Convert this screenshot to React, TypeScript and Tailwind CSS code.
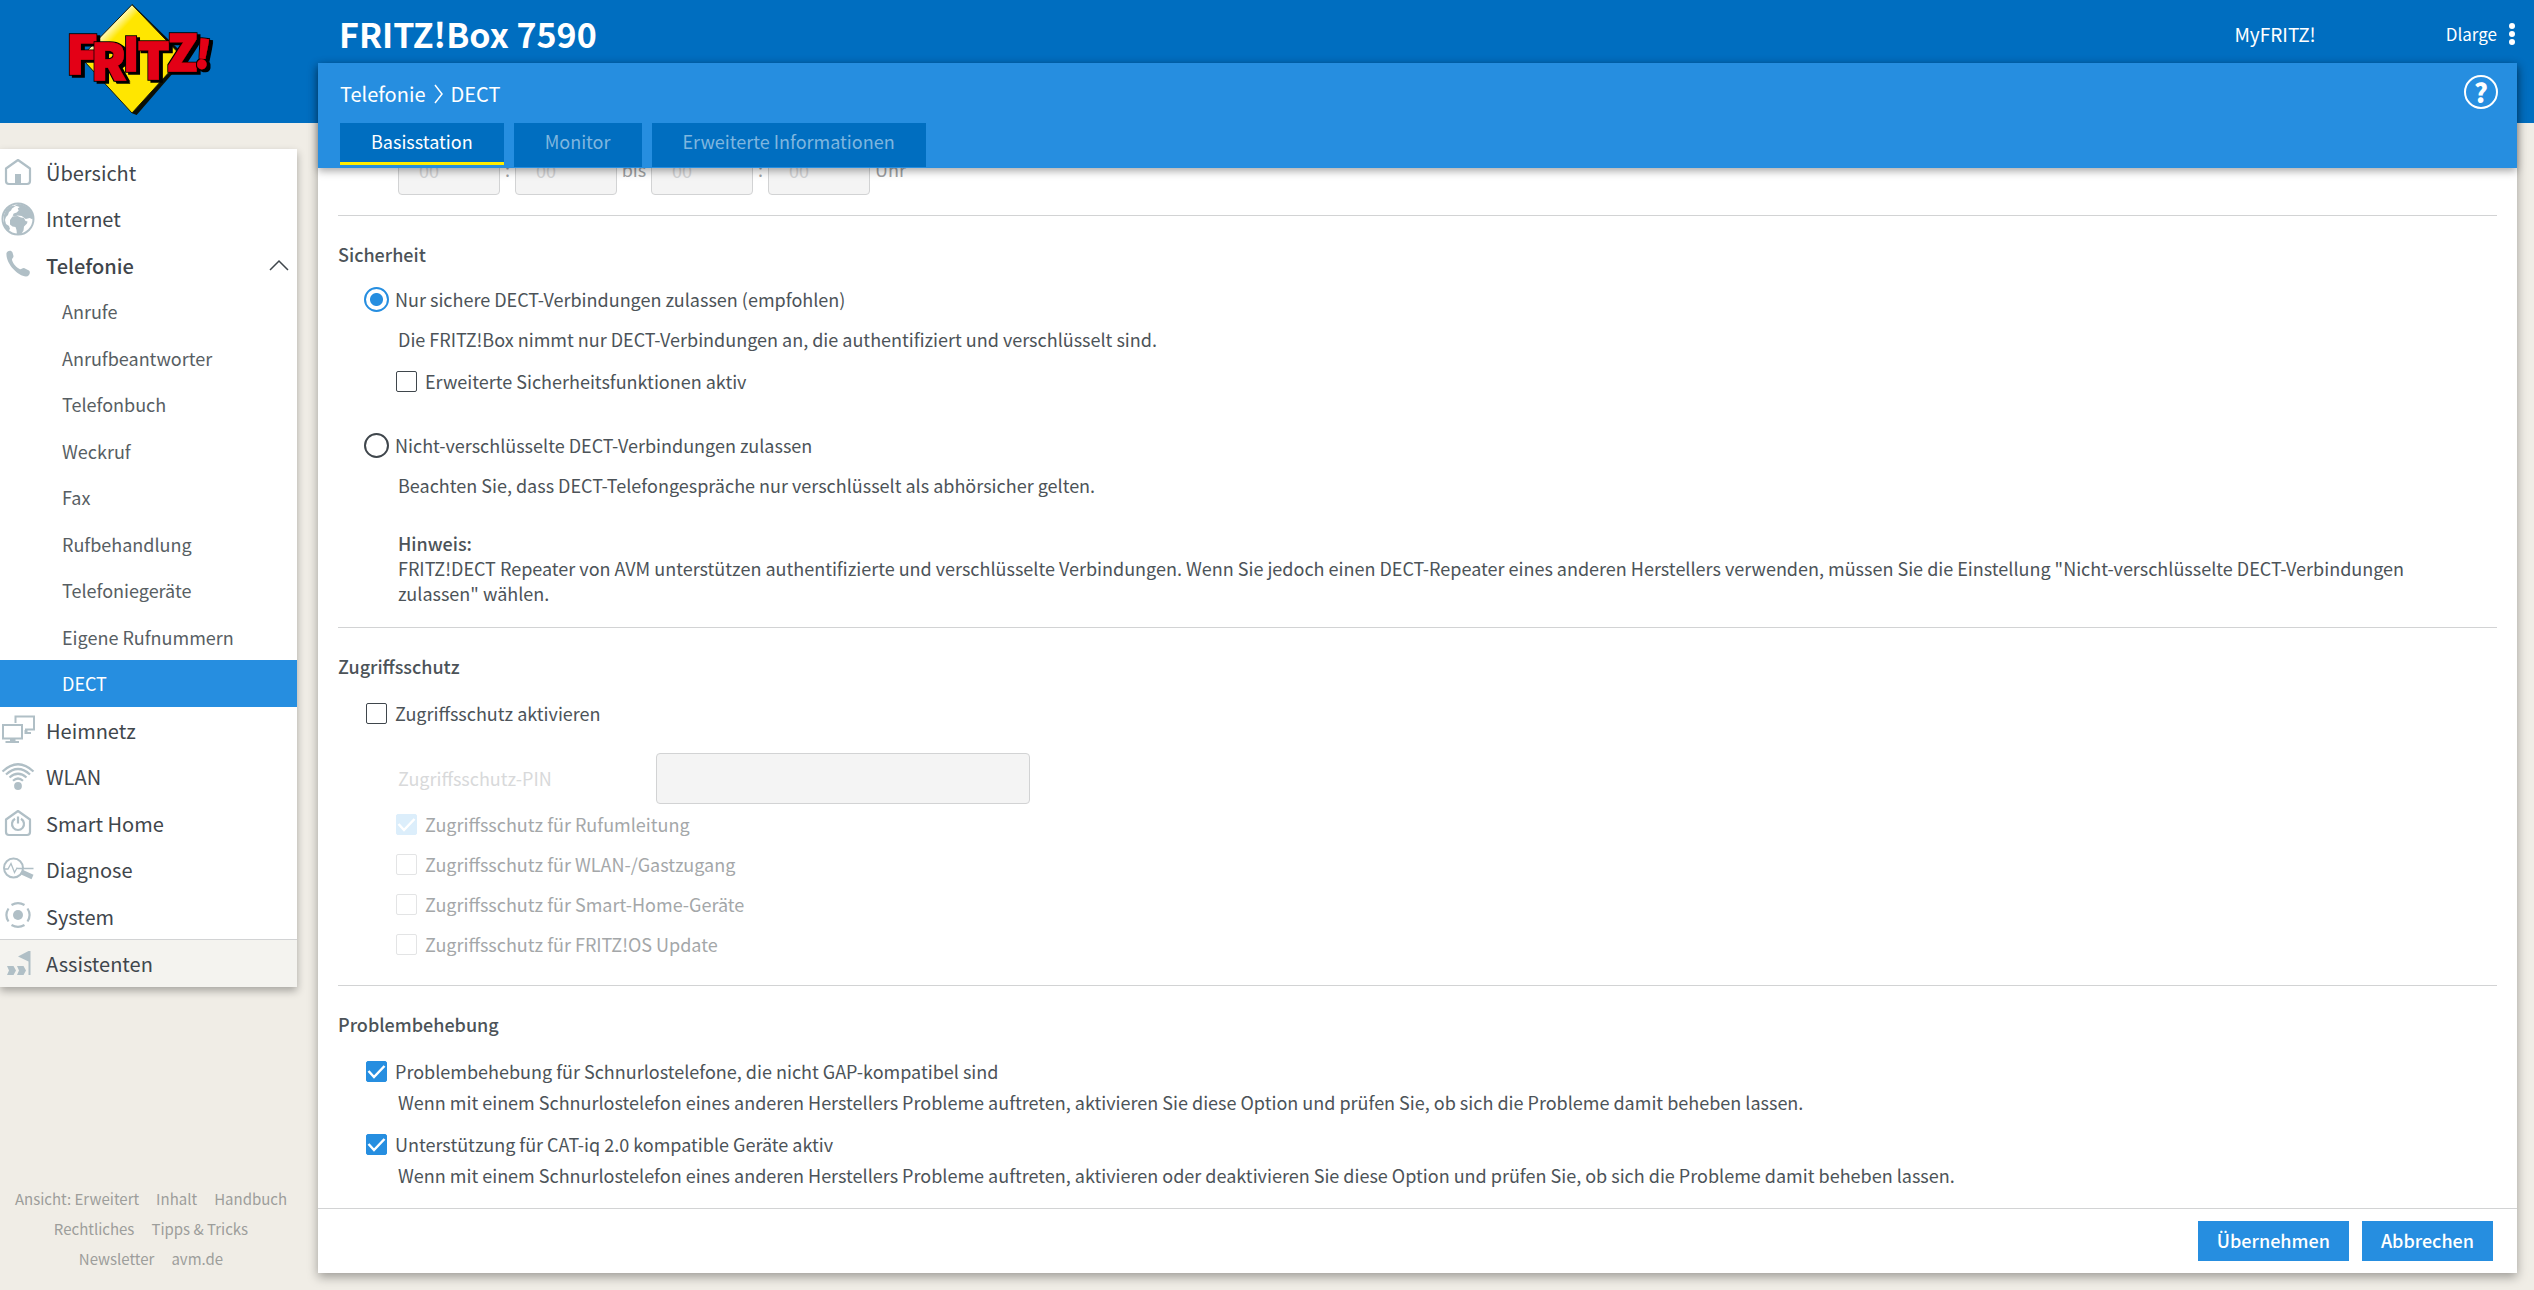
import { useState } from "react";
import type { ReactNode } from "react";

interface NavItem {
  label: string;
  icon?: ReactNode;
  level: "main" | "sub";
  open?: boolean;
}

const HomeIcon = () => (
  <svg viewBox="0 0 34 34" className="size-[34px]" fill="none" stroke="currentColor" strokeWidth={2.2}>
    <path d="M5 13.500 17 5l12 8.500V26q0 3-3 3H8q-3 0-3-3z" strokeLinejoin="round" />
    <path d="M14 19h6v9h-6z" fill="currentColor" stroke="none" />
  </svg>
);

const GlobeIcon = () => (
  <svg viewBox="0 0 34 34" className="size-[34px]">
    <circle cx="17" cy="17" r="15.500" fill="none" stroke="currentColor" strokeWidth={2} />
    <path
      fill="currentColor"
      d="M17 2c6 0 12 4 14.500 10 .8 2.500.5 4 .2 5.500l-3-1.500-4 1-4-3-4-.5-3 1-2-1 1-2 3-1 2-2-1-2 2-1.500-3-1-3 .5zM3 13l2-5 4-3.500 4-1 1 1-3 2-1 2-2 1.500-1 3-2 2-1 3 1 4 3 2 1 3-2 2-4-5z"
    />
    <path
      fill="currentColor"
      d="M9 18l2.500-3.500 5-.5 3.500 1.500 3 .5 1.500 3 2 .5-.5 2-3 3-.5 4-2 3-1.500 1.500-3 0-.5-5-1-3-3-.5-2.500-2z"
    />
  </svg>
);

const PhoneIcon = () => (
  <svg viewBox="0 0 34 34" className="size-[34px]" fill="currentColor">
    <path d="M5.500 5C7 2 10.500 2 11.500 4.500l1 3.500c.2 1.500-1.800 2.500-1.500 4 .8 3.500 5 8 8 9.200 1.500.3 2.500-1.300 4-1.200l5 2.500c2 1.500.2 6-3 6C17 28 4.500 15.500 5.500 5z" />
  </svg>
);

const NetworkIcon = () => (
  <svg viewBox="0 0 34 34" className="size-[34px]" fill="none" stroke="currentColor" strokeWidth={2}>
    <path d="M14.500 10V3.500H33v13h-9" />
    <path d="M2 12h19v13.500H2z" />
    <path d="M9 25.500h5.500v2.500h3.500v2H4.500v-2H9zM23.500 17h3v2h3.500v2h-6.500z" fill="currentColor" stroke="none" />
  </svg>
);

const WifiIcon = () => (
  <svg viewBox="0 0 34 34" className="size-[34px]" fill="none" stroke="currentColor" strokeWidth={2.2}>
    <path d="M1.500 11.500Q17-3 32.500 11.500M5 14.500Q17 3.500 29 14.500M8.500 17.500Q17 10 25.500 17.500M12 20.800q5-4.600 10 0" />
    <circle cx="17" cy="26" r="3.900" fill="currentColor" stroke="none" />
  </svg>
);

const SmartHomeIcon = () => (
  <svg viewBox="0 0 34 34" className="size-[34px]" fill="none" stroke="currentColor" strokeWidth={2.200}>
    <path d="M5 13.500 17 5l12 8.500V26q0 3-3 3H8q-3 0-3-3z" strokeLinejoin="round" />
    <path d="M14 12.800a6 6 0 1 0 6 0M17 10.500v7" />
  </svg>
);

const DiagnoseIcon = () => (
  <svg viewBox="0 0 34 34" className="size-[34px]" fill="none" stroke="currentColor">
    <circle cx="12.500" cy="15" r="9.500" strokeWidth={2} />
    <path d="M3 16h4l3-5.500 3.500 9 2.500-4.500L17 15.500h15.500" strokeWidth={1.300} />
    <path d="m20.500 19 11 5" strokeWidth={4.800} />
  </svg>
);

const SystemIcon = () => (
  <svg viewBox="0 0 34 34" className="size-[34px]" fill="none" stroke="currentColor" strokeWidth={2.200}>
    <circle cx="17" cy="16" r="5" fill="currentColor" stroke="none" />
    <path d="M10.500 6a12.500 12.500 0 0 1 13 0M10.500 26a12.500 12.500 0 0 0 13 0M7.500 9.500a12 12 0 0 0 0 13M26.500 9.500a12 12 0 0 1 0 13" />
  </svg>
);

const WizardIcon = () => (
  <svg viewBox="0 0 34 34" className="size-[34px]" fill="currentColor">
    <path d="M27.500 4h2v24h-2V14.500L17 9.500zM6 19h6.500l2.500 4.500-2.500 4.500H6l2-4.500zM16 19h6.500l2.500 4.500-2.500 4.500H16l2-4.500z" />
  </svg>
);

const NAV_ITEMS: NavItem[] = [
  { label: "Übersicht", icon: <HomeIcon />, level: "main" },
  { label: "Internet", icon: <GlobeIcon />, level: "main" },
  { label: "Telefonie", icon: <PhoneIcon />, level: "main", open: true },
  { label: "Anrufe", level: "sub" },
  { label: "Anrufbeantworter", level: "sub" },
  { label: "Telefonbuch", level: "sub" },
  { label: "Weckruf", level: "sub" },
  { label: "Fax", level: "sub" },
  { label: "Rufbehandlung", level: "sub" },
  { label: "Telefoniegeräte", level: "sub" },
  { label: "Eigene Rufnummern", level: "sub" },
  { label: "DECT", level: "sub" },
  { label: "Heimnetz", icon: <NetworkIcon />, level: "main" },
  { label: "WLAN", icon: <WifiIcon />, level: "main" },
  { label: "Smart Home", icon: <SmartHomeIcon />, level: "main" },
  { label: "Diagnose", icon: <DiagnoseIcon />, level: "main" },
  { label: "System", icon: <SystemIcon />, level: "main" },
  { label: "Assistenten", icon: <WizardIcon />, level: "main" },
];

const FOOTER_LINKS = [
  ["Ansicht: Erweitert", "Inhalt", "Handbuch"],
  ["Rechtliches", "Tipps & Tricks"],
  ["Newsletter", "avm.de"],
];

const TABS = ["Basisstation", "Monitor", "Erweiterte Informationen"];

const LOGO_LETTERS = [
  { char: "F", x: 19, y: 221, size: 156, rotate: 0 },
  { char: "R", x: 94, y: 239, size: 147, rotate: 0 },
  { char: "I", x: 189, y: 213, size: 138, rotate: 0 },
  { char: "T", x: 234, y: 238, size: 147, rotate: 0 },
  { char: "Z", x: 322, y: 212, size: 147, rotate: 0 },
  { char: "!", x: 402, y: 201, size: 112, rotate: 7 },
];

function Logo() {
  return (
    <svg viewBox="0 0 480 369" className="h-[123px] w-40" role="img" aria-label="FRITZ!">
      <defs>
        <linearGradient id="shine" x1="0" y1="0" x2="1" y2="1">
          <stop offset="0.240" stopColor="#fffbd0" />
          <stop offset="0.320" stopColor="#ffe600" />
        </linearGradient>
        <filter id="relief" x="-20%" y="-20%" width="150%" height="150%">
          <feMorphology in="SourceAlpha" operator="dilate" radius="2" result="edge" />
          <feOffset in="edge" dx="8" dy="6" result="shadow" />
          <feMerge>
            <feMergeNode in="shadow" />
            <feMergeNode in="edge" />
            <feMergeNode in="SourceGraphic" />
          </feMerge>
        </filter>
      </defs>
      <path d="M216 12 380 172 230 345 216 340z" fill="#0b0f06" />
      <path d="M216 14 368 172 216 339 62 172z" fill="url(#shine)" stroke="#1b1b06" strokeWidth={3} />
      <g
        fontFamily="'Noto Sans CJK SC', sans-serif"
        fontWeight={900}
        fill="#e30613"
        stroke="#e30613"
        strokeWidth={5}
      >
        {LOGO_LETTERS.map((l) => (
          <g key={l.char} filter="url(#relief)">
            <text x={l.x} y={l.y} fontSize={l.size} transform={`rotate(${l.rotate} ${l.x} ${l.y})`}>{l.char}</text>
          </g>
        ))}
      </g>
    </svg>
  );
}

function Sidebar() {
  const [active, setActive] = useState("DECT");

  return (
    <aside className="flex w-[318px] shrink-0 flex-col">
      <div className="flex h-[123px] pl-[60px]">
        <Logo />
      </div>

      <nav className="mt-[26px] w-[297px] bg-white shadow-[0_4px_8px_rgba(0,0,0,0.3)]">
        <ul>
          {NAV_ITEMS.map((item) => (
            <li
              key={item.label}
              className="h-[46px] last:h-12 last:border-t last:border-[#d2d3d4] last:bg-[#f4f3ef] even:not-last:h-[47px]"
            >
              <a
                href="#"
                onClick={() => setActive(item.label)}
                className={
                  item.level === "main"
                    ? "flex h-full items-center pr-2 pl-px text-[20px] text-[#3f464c]"
                    : item.label === active
                      ? "flex h-full items-center bg-[#268ee0] pl-[62px] text-[18px] text-white"
                      : "flex h-full items-center pl-[62px] text-[18px] text-[#575e63]"
                }
              >
                {item.icon && <span className="mr-[11px] text-[#b0bfc6]">{item.icon}</span>}
                <span className={item.open ? "font-medium" : ""}>{item.label}</span>
                {item.open && (
                  <svg viewBox="0 0 20 12" className="ml-auto h-3 w-5" fill="none" stroke="#3f464c" strokeWidth={1.500}>
                    <path d="M1 11 10 2l9 9" />
                  </svg>
                )}
              </a>
            </li>
          ))}
        </ul>
      </nav>

      <footer className="mt-auto mb-4 w-[302px] text-[15px] leading-[30px] text-[#9d9e9b]">
        {FOOTER_LINKS.map((row) => (
          <div key={row[0]} className="flex justify-center gap-[17px]">
            {row.map((link) => (
              <a key={link} href="#">{link}</a>
            ))}
          </div>
        ))}
      </footer>
    </aside>
  );
}

interface CheckProps {
  label: string;
  defaultChecked?: boolean;
  disabled?: boolean;
}

function Check({ label, defaultChecked, disabled }: CheckProps) {
  return (
    <label className={disabled ? "flex w-fit items-center gap-2 text-[#a4a7a9]" : "flex w-fit items-center gap-2"}>
      <span className="grid size-[21px] place-items-center">
        <input
          type="checkbox"
          defaultChecked={defaultChecked}
          disabled={disabled}
          className="peer col-start-1 row-start-1 size-[21px] appearance-none rounded-xs border border-[#3f464c] bg-white checked:border-[#268ee0] checked:bg-[#268ee0] disabled:border-[#e3e4e5] disabled:checked:border-[#dceefb] disabled:checked:bg-[#dceefb]"
        />
        <svg
          viewBox="0 0 21 21"
          className="pointer-events-none col-start-1 row-start-1 hidden size-[21px] peer-checked:block"
          fill="none"
          stroke="white"
          strokeWidth={2.500}
        >
          <path d="m2.500 10 5.500 6L18.500 5" />
        </svg>
      </span>
      {label}
    </label>
  );
}

function Radio({ label, defaultChecked }: CheckProps) {
  return (
    <label className="flex w-fit items-center gap-[6px]">
      <input
        type="radio"
        name="security"
        defaultChecked={defaultChecked}
        className="size-[25px] appearance-none rounded-full border-2 border-[#3f464c] bg-white checked:border-[#268ee0] checked:bg-[radial-gradient(circle,#268ee0_6px,white_7px)]"
      />
      {label}
    </label>
  );
}

function TimeInput({ label }: { label: string }) {
  return (
    <input
      aria-label={label}
      placeholder="00"
      disabled
      className="h-[51px] w-[102px] rounded-sm border border-[#d2d3d4] bg-[#f4f4f4] pl-5 placeholder:text-[#d2d3d4]"
    />
  );
}

export default function App() {
  const [tab, setTab] = useState("Basisstation");

  return (
    <div className="flex h-screen bg-[linear-gradient(#006ec0_123px,#f0ede6_123px)] font-['Noto_Sans_CJK_SC',sans-serif] text-[18px] leading-[25px] text-[#4c5358]">
      <Sidebar />

      <div className="flex min-w-0 flex-1 flex-col pr-[17px] pb-[17px]">
        <header className="flex h-[63px] shrink-0 items-center pt-1 pl-[21px] text-white">
          <h1 className="text-[34px] font-bold">FRITZ!Box 7590</h1>
          <a href="#" className="ml-auto text-[19px]">MyFRITZ!</a>
          <button type="button" className="ml-[130px] flex items-center gap-3 text-[17px]">
            Dlarge
            <svg viewBox="0 0 6 22" className="mr-[2px] h-[22px] w-[6px]" fill="white">
              <circle cx="3" cy="3" r="3" />
              <circle cx="3" cy="11" r="3" />
              <circle cx="3" cy="19" r="3" />
            </svg>
          </button>
        </header>

        <main className="flex min-h-0 flex-1 flex-col bg-white shadow-[0_4px_10px_rgba(0,0,0,0.35)]">
          <div className="z-10 h-[105px] shrink-0 bg-[#268ee0] pl-[22px] text-white shadow-[0_3px_8px_rgba(0,0,0,0.35)]">
            <div className="flex h-[60px] items-start pt-3 pr-[19px]">
              <div className="flex items-center gap-2 text-[20px] leading-[38px]">
                <a href="#">Telefonie</a>
                <svg viewBox="0 0 9 20" className="h-5 w-[9px]" fill="none" stroke="white" strokeWidth={1.500}>
                  <path d="m1 1 7 9-7 9" />
                </svg>
                <span>DECT</span>
              </div>
              <button
                type="button"
                aria-label="Hilfe"
                className="ml-auto flex size-[34px] items-center justify-center rounded-full border-2 border-white pb-[2px] text-[26px] font-black"
              >
                ?
              </button>
            </div>
            <div className="flex gap-[10px]">
              {TABS.map((name) => (
                <button
                  key={name}
                  type="button"
                  onClick={() => setTab(name)}
                  className={
                    name === tab
                      ? "h-[42px] border-b-3 border-[#ffed00] bg-[#006ec0] px-[31px] pb-[2px]"
                      : "h-11 bg-[#006ec0] px-[31px] pb-[7px] text-[#7fb6df]"
                  }
                >
                  {name}
                </button>
              ))}
            </div>
          </div>

          <div className="min-h-0 flex-1 overflow-hidden px-5">
            <section className="-mt-6 border-b border-[#d2d3d4] pb-5 pl-[60px]">
              <div className="flex items-center text-[#9ea1a3]">
                <TimeInput label="Von Stunde" />
                <span className="w-[15px] text-center">:</span>
                <TimeInput label="Von Minute" />
                <span className="w-[34px] text-center">bis</span>
                <TimeInput label="Bis Stunde" />
                <span className="w-[15px] text-center">:</span>
                <TimeInput label="Bis Minute" />
                <span className="ml-[5px]">Uhr</span>
              </div>
            </section>

            <section className="border-b border-[#d2d3d4] pt-[26px] pb-[21px]">
              <h2 className="font-medium">Sicherheit</h2>
              <div className="mt-5 pl-[26px]">
                <Radio label="Nur sichere DECT-Verbindungen zulassen (empfohlen)" defaultChecked />
              </div>
              <p className="mt-[15px] pl-[60px]">
                Die FRITZ!Box nimmt nur DECT-Verbindungen an, die authentifiziert und verschlüsselt sind.
              </p>
              <div className="mt-[17px] pl-[58px]">
                <Check label="Erweiterte Sicherheitsfunktionen aktiv" />
              </div>
              <div className="mt-[39px] pl-[26px]">
                <Radio label="Nicht-verschlüsselte DECT-Verbindungen zulassen" />
              </div>
              <p className="mt-[15px] pl-[60px]">
                Beachten Sie, dass DECT-Telefongespräche nur verschlüsselt als abhörsicher gelten.
              </p>
              <p className="mt-[33px] pr-10 pl-[60px]">
                <strong className="font-medium">Hinweis:</strong>
                <br />
                FRITZ!DECT Repeater von AVM unterstützen authentifizierte und verschlüsselte Verbindungen. Wenn Sie
                jedoch einen DECT-Repeater eines anderen Herstellers verwenden, müssen Sie die Einstellung
                "Nicht-verschlüsselte DECT-Verbindungen zulassen" wählen.
              </p>
            </section>

            <section className="border-b border-[#d2d3d4] pt-[26px] pb-7">
              <h2 className="font-medium">Zugriffsschutz</h2>
              <div className="mt-[22px] pl-7">
                <Check label="Zugriffsschutz aktivieren" />
              </div>
              <div className="mt-[27px] flex items-center pl-[60px]">
                <label htmlFor="pin" className="w-[258px] text-[#d8d9da]">Zugriffsschutz-PIN</label>
                <input
                  id="pin"
                  disabled
                  className="h-[51px] w-[374px] rounded-sm border border-[#d2d3d4] bg-[#f4f4f4] px-5"
                />
              </div>
              <div className="mt-2 flex flex-col gap-[15px] pl-[58px]">
                <Check label="Zugriffsschutz für Rufumleitung" defaultChecked disabled />
                <Check label="Zugriffsschutz für WLAN-/Gastzugang" disabled />
                <Check label="Zugriffsschutz für Smart-Home-Geräte" disabled />
                <Check label="Zugriffsschutz für FRITZ!OS Update" disabled />
              </div>
            </section>

            <section className="pt-[26px]">
              <h2 className="font-medium">Problembehebung</h2>
              <div className="mt-[22px] pl-7">
                <Check label="Problembehebung für Schnurlostelefone, die nicht GAP-kompatibel sind" defaultChecked />
              </div>
              <p className="mt-[6px] pl-[60px]">
                Wenn mit einem Schnurlostelefon eines anderen Herstellers Probleme auftreten, aktivieren Sie diese
                Option und prüfen Sie, ob sich die Probleme damit beheben lassen.
              </p>
              <div className="mt-[17px] pl-7">
                <Check label="Unterstützung für CAT-iq 2.0 kompatible Geräte aktiv" defaultChecked />
              </div>
              <p className="mt-[6px] pl-[60px]">
                Wenn mit einem Schnurlostelefon eines anderen Herstellers Probleme auftreten, aktivieren oder
                deaktivieren Sie diese Option und prüfen Sie, ob sich die Probleme damit beheben lassen.
              </p>
            </section>
          </div>

          <div className="flex h-[65px] shrink-0 items-center justify-end gap-[13px] border-t border-[#d2d3d4] pr-6">
            <button type="button" className="h-10 bg-[#268ee0] px-[19px] pb-[2px] font-medium text-white">Übernehmen</button>
            <button type="button" className="h-10 bg-[#268ee0] px-[19px] pb-[2px] font-medium text-white">Abbrechen</button>
          </div>
        </main>
      </div>
    </div>
  );
}
